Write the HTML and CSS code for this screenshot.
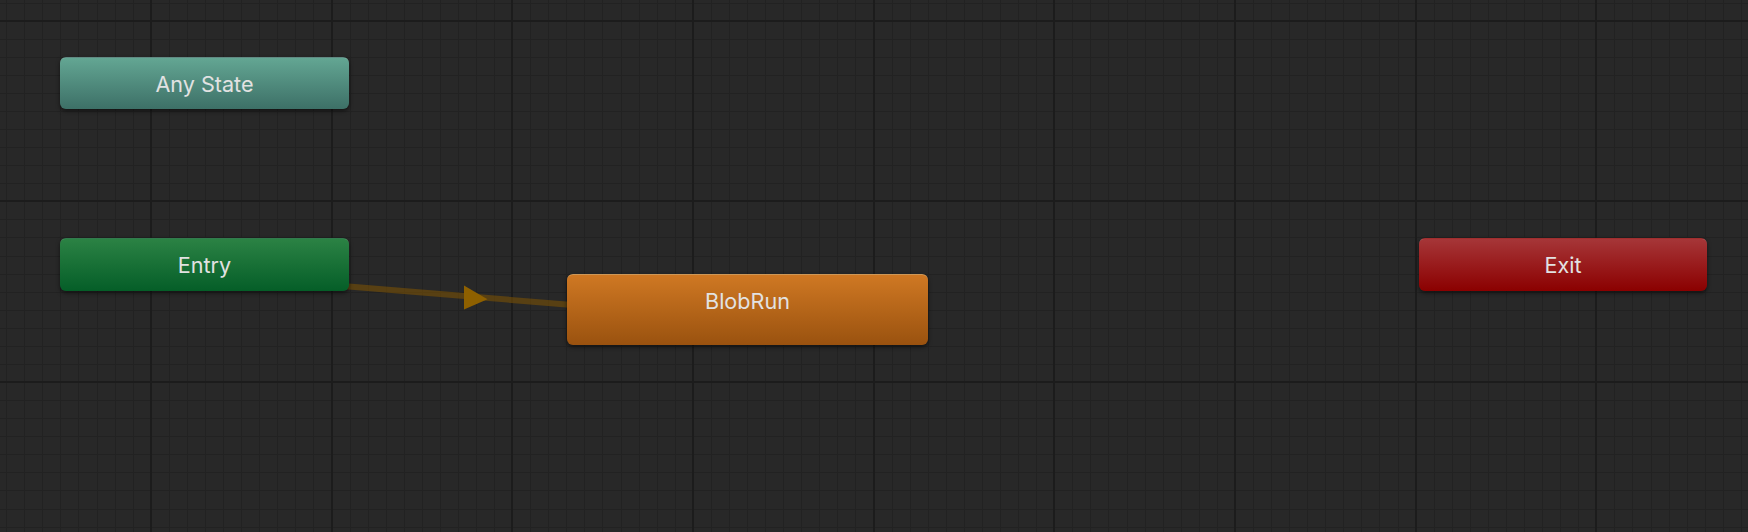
FILE: index.html
```html
<!DOCTYPE html>
<html>
<head>
<meta charset="utf-8">
<link rel="stylesheet" href="styles.css">
</head>
<body>
<div class="graph">
  <svg class="links" width="1748" height="532" viewBox="0 0 1748 532">
    <line x1="300" y1="282.5" x2="600" y2="307.3" class="link"/>
    <polygon points="464,285.5 464,309.5 487.5,299.2" class="arrow"/>
  </svg>
  <div class="node any" style="left:60px;top:57px;width:289px;height:52px">Any State</div>
  <div class="node entry" style="left:60px;top:238px;width:289px;height:53px">Entry</div>
  <div class="node state" style="left:567px;top:274px;width:361px;height:71px">BlobRun</div>
  <div class="node exit" style="left:1419px;top:238px;width:288px;height:53px">Exit</div>
</div>
</body>
</html>
```
FILE: styles.css
```css
html, body {
  margin: 0;
  padding: 0;
  background: #282828;
}
.graph {
  position: relative;
  width: 1748px;
  height: 532px;
  overflow: hidden;
  background-color: #282828;
  background-image:
    repeating-linear-gradient(to right, #1c1c1c 0 2px, transparent 2px 180.7px),
    repeating-linear-gradient(to bottom, #1c1c1c 0 2px, transparent 2px 180.7px),
    repeating-linear-gradient(to right, #222222 0 1px, transparent 1px 18.07px),
    repeating-linear-gradient(to bottom, #222222 0 1px, transparent 1px 18.07px);
  background-size: 2200px 900px;
  background-repeat: no-repeat;
  background-position:
    -30.9px 0,
    0 -161px,
    -11.9px 0,
    0 -15.5px;
  font-family: Inter, "Noto Sans", sans-serif;
}
.links {
  position: absolute;
  left: 0;
  top: 0;
}
.link {
  stroke: rgba(120, 80, 5, 0.6);
  stroke-width: 6;
}
.arrow {
  fill: #8e6000;
}
.node {
  position: absolute;
  box-sizing: border-box;
  border-radius: 6px;
  text-align: center;
  line-height: 52px;
  font-size: 21.6px;
  color: #e2e2e2;
  box-shadow: 0 2px 4px rgba(0, 0, 0, 0.55);
  border-top: 1px solid rgba(255, 255, 255, 0.18);
}
.any {
  background: linear-gradient(to bottom, #63a693, #3d7067);
}
.entry {
  background: linear-gradient(to bottom, #2b8244, #055e28);
}
.exit {
  background: linear-gradient(to bottom, #a63638, #8b0000);
}
.state {
  background: linear-gradient(to bottom, #cf7823, #9a520f);
  border-top-color: rgba(255, 220, 160, 0.5);
}
```
